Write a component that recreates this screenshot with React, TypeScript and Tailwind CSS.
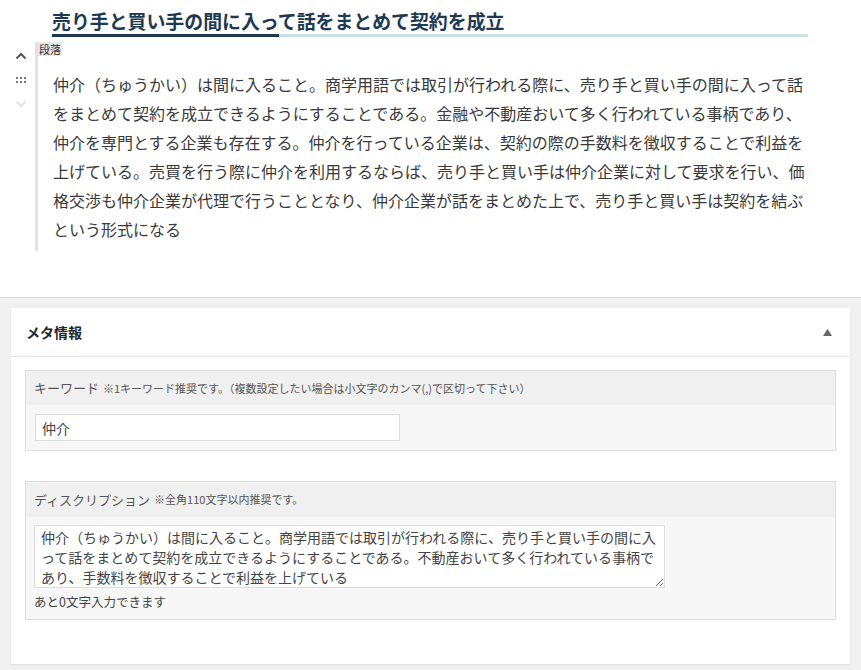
import React from "react";

const jp = "font-['Noto_Sans_CJK_JP','Noto_Sans',sans-serif]";

const paragraphLines = [
  "仲介（ちゅうかい）は間に入ること。商学用語では取引が行われる際に、売り手と買い手の間に入って話",
  "をまとめて契約を成立できるようにすることである。金融や不動産おいて多く行われている事柄であり、",
  "仲介を専門とする企業も存在する。仲介を行っている企業は、契約の際の手数料を徴収することで利益を",
  "上げている。売買を行う際に仲介を利用するならば、売り手と買い手は仲介企業に対して要求を行い、価",
  "格交渉も仲介企業が代理で行うこととなり、仲介企業が話をまとめた上で、売り手と買い手は契約を結ぶ",
  "という形式になる",
];

const descText =
  "仲介（ちゅうかい）は間に入ること。商学用語では取引が行われる際に、売り手と買い手の間に入\nって話をまとめて契約を成立できるようにすることである。不動産おいて多く行われている事柄で\nあり、手数料を徴収することで利益を上げている";

export default function App() {
  return (
    <div className={`w-[861px] h-[670px] overflow-hidden bg-white ${jp}`}>
      {/* editor area */}
      <div className="h-[297px]">
        <div className="pl-[52px] pt-[8px] w-[808px]">
          <h2 className="text-[18.9px] leading-[26px] font-bold text-[#1d3a52]">
            売り手と買い手の間に入って話をまとめて契約を成立
          </h2>
          <div className="flex h-[3px]">
            <div className="w-[227px] bg-[#1d3a52]" />
            <div className="flex-1 bg-[#c9e1eb]" />
          </div>
        </div>

        <div className="flex mt-[5px]">
          <div className="w-[35px] flex flex-col items-center pt-[10px]">
            <svg width="12" height="8" viewBox="0 0 12 8" className="ml-[6px]">
              <path d="M1.5 6.5 L6 2 L10.5 6.5" fill="none" stroke="#555" strokeWidth="2" />
            </svg>
            <div className="ml-[6px] mt-[17px] grid grid-cols-3 gap-x-[2px] gap-y-[2px]">
              {Array.from({ length: 6 }).map((_, i) => (
                <span key={i} className="block w-[2px] h-[2px] bg-[#777]" />
              ))}
            </div>
            <svg width="12" height="8" viewBox="0 0 12 8" className="ml-[6px] mt-[17px]">
              <path d="M1.5 1.5 L6 6 L10.5 1.5" fill="none" stroke="#e4e4e4" strokeWidth="2" />
            </svg>
          </div>
          <div className="border-l-[3px] border-[#e2e2e6] h-[209px] w-[773px]">
            <div className="w-fit bg-[#e8e8e8] text-[11px] leading-[14px] text-[#333] px-[1px]">
              段落
            </div>
            <p className="mt-[14px] pl-[15px] text-[16px] leading-[29px] text-[#3a3a3a] whitespace-nowrap">
              {paragraphLines.map((l, i) => (
                <span key={i} className="block">
                  {l}
                </span>
              ))}
            </p>
          </div>
        </div>
      </div>

      {/* meta box area */}
      <div className="border-t border-[#dcdcde] bg-[#f0f0f1] pt-[10px] px-[11px] h-[373px]">
        <div className="bg-white shadow-[0_1px_1px_rgba(0,0,0,0.06)]">
          <div className="h-[49px] border-b border-[#e5e5e5] flex items-center justify-between pl-[15px] pr-[18px]">
            <span className="text-[14px] font-bold text-[#23282d]">メタ情報</span>
            <svg width="9" height="7" viewBox="0 0 9 7">
              <path d="M4.5 0 L9 7 L0 7 Z" fill="#666" />
            </svg>
          </div>

          <div className="px-[14px] pt-[13px] pb-[44px]">
            <div className="border border-[#dddddd]">
              <div className="h-[34px] bg-[#f0f0f0] flex items-center px-[8px] text-[#555]">
                <span className="text-[13px]">キーワード</span>
                <span className="text-[11px] ml-[4px]">
                  ※1キーワード推奨です。（複数設定したい場合は小文字のカンマ(,)で区切って下さい）
                </span>
              </div>
              <div className="bg-[#f7f7f7] p-[9px]">
                <input
                  readOnly
                  defaultValue="仲介"
                  className="block w-[365px] h-[27px] border border-[#dddddd] bg-white px-[6px] text-[14px] text-[#444] outline-none"
                />
              </div>
            </div>

            <div className="border border-[#dddddd] mt-[30px]">
              <div className="h-[35px] bg-[#f0f0f0] flex items-center px-[8px] text-[#555]">
                <span className="text-[13px]">ディスクリプション</span>
                <span className="text-[11px] ml-[4px]">※全角110文字以内推奨です。</span>
              </div>
              <div className="bg-[#f7f7f7] pt-[8px] pl-[8px] pb-[8px]">
                <textarea
                  readOnly
                  defaultValue={descText}
                  className="block w-[631px] h-[63px] border border-[#dddddd] bg-white px-[6px] pt-[1px] pb-0 text-[14px] leading-[20px] text-[#444] outline-none whitespace-pre overflow-hidden"
                />
                <div className="mt-[5px] text-[12.5px] leading-[18px] text-[#444]">あと0文字入力できます</div>
              </div>
            </div>
          </div>
        </div>
      </div>
    </div>
  );
}
